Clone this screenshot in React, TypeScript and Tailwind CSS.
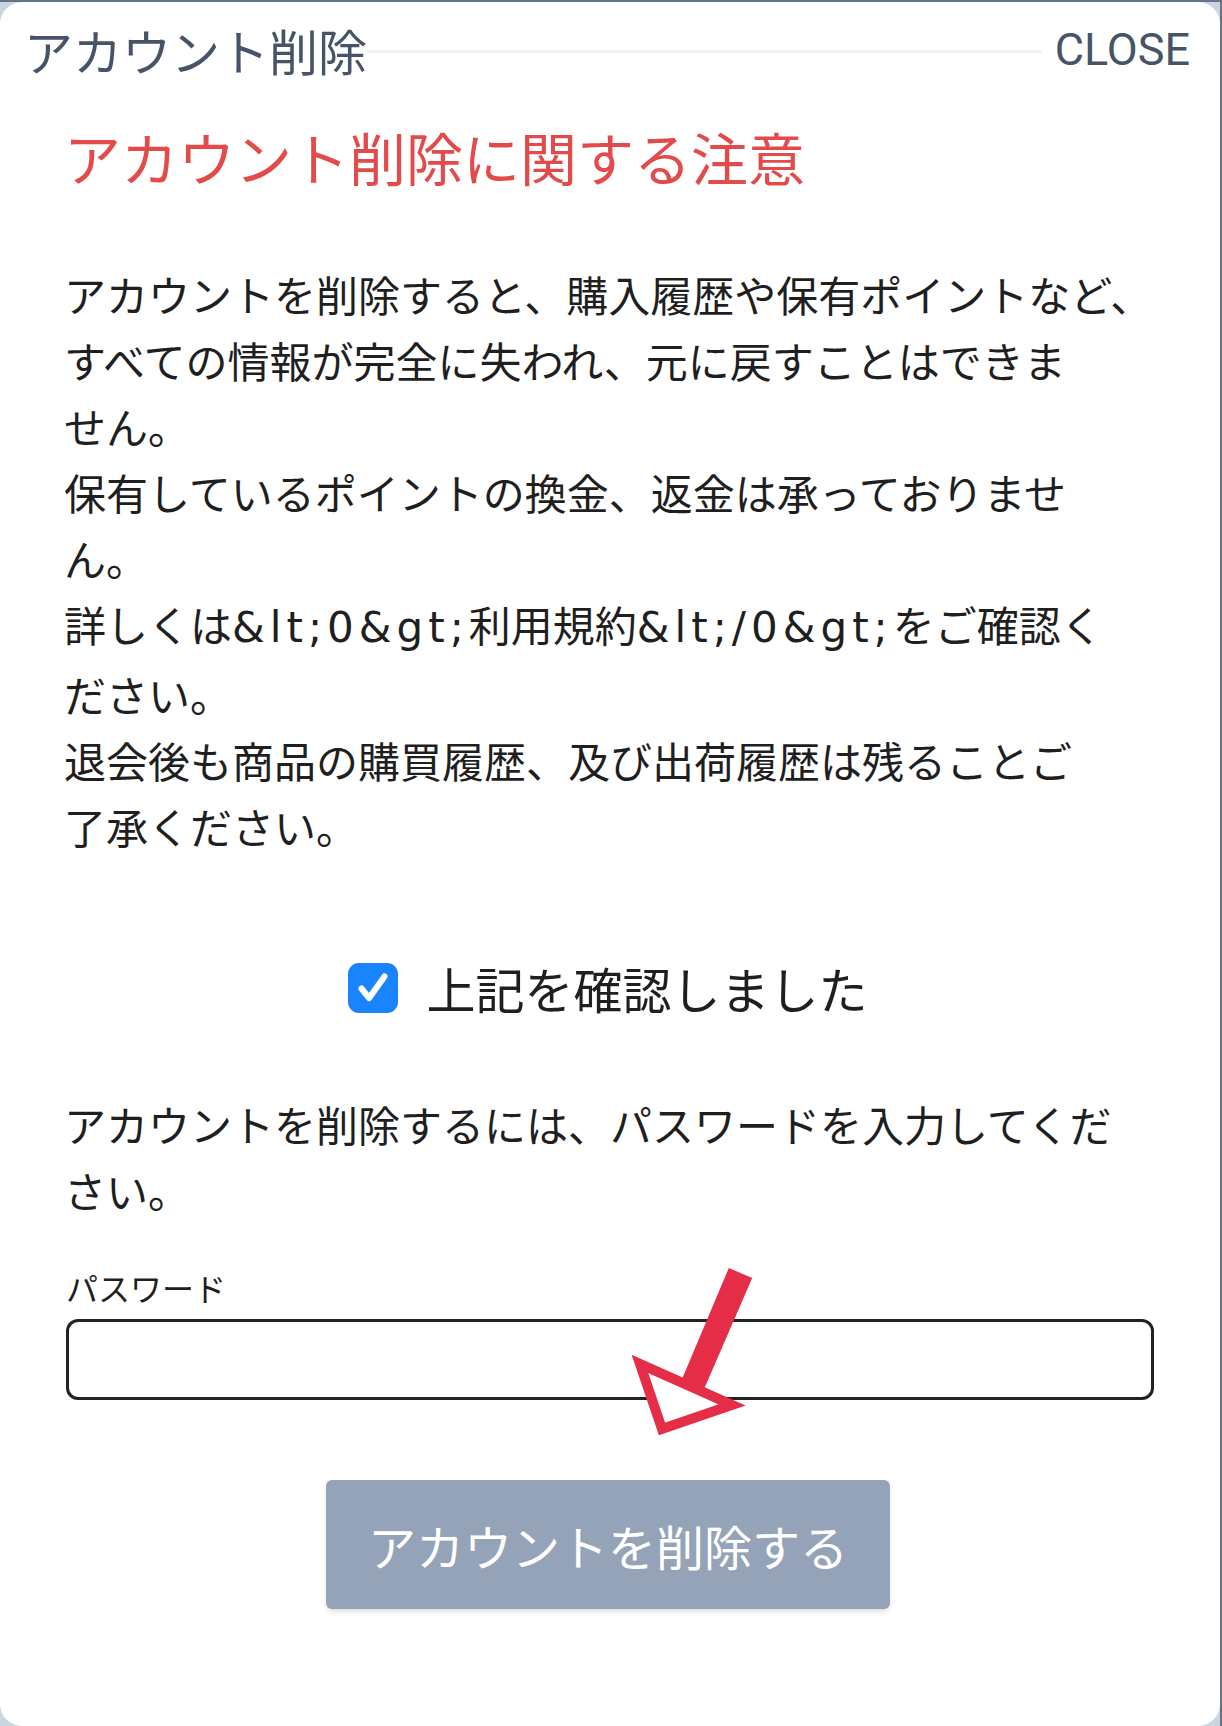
import React from 'react';

/**
 * アカウント削除モーダル
 */
const jp = "font-['Noto_Sans_CJK_JP',sans-serif]";
const latin = "font-['DejaVu_Sans',sans-serif] tracking-[5px]";

const noticeLines: React.ReactNode[] = [
  'アカウントを削除すると、購入履歴や保有ポイントなど、',
  'すべての情報が完全に失われ、元に戻すことはできま',
  'せん。',
  '保有しているポイントの換金、返金は承っておりませ',
  'ん。',
  <>
    詳しくは<span className={latin}>&amp;lt;0&amp;gt;</span>利用規約
    <span className={latin}>&amp;lt;/0&amp;gt;</span>をご確認く
  </>,
  'ださい。',
  '退会後も商品の購買履歴、及び出荷履歴は残ることご',
  '了承ください。',
];

const RedArrow: React.FC = () => (
  <svg
    className="absolute left-[600px] top-[1260px] pointer-events-none"
    width="170"
    height="190"
    viewBox="0 0 170 190"
  >
    <polygon
      points="40,102 62,167 132,143"
      fill="white"
      stroke="#e52d47"
      strokeWidth="10"
      strokeLinejoin="miter"
    />
    <polygon points="128.8,6 152.2,16 103.2,129 80.8,120" fill="#e52d47" />
  </svg>
);

export default function App() {
  return (
    <div className="w-[1222px] h-[1726px] bg-[#cbd5e1] border-t-2 border-r-2 border-[#64748b] overflow-hidden">
      <div className={`relative h-full bg-white rounded-[22px] pt-[13px] ${jp}`}>
        {/* ヘッダー */}
        <div className="flex items-center h-[70px] pl-[24px] pr-[30px]">
          <h2 className="text-[49px] leading-[70px] text-[#475467] whitespace-nowrap">アカウント削除</h2>
          <div className="flex-1 h-[3px] bg-[#f1f3f5] mt-[2px]" />
          <button className="ml-[13px] font-['Roboto',sans-serif] text-[45px] leading-[70px] text-[#475467]">
            CLOSE
          </button>
        </div>

        <div className="pl-[64px] pr-[68px]">
          <h3 className="mt-[32px] text-[57px] leading-[78px] text-[#e34b4b] whitespace-nowrap">
            アカウント削除に関する注意
          </h3>

          <div className="mt-[66px] text-[42px] leading-[66px] text-[#1f1f1f]">
            {noticeLines.map((line, i) => (
              <p key={i} className="whitespace-nowrap">
                {line}
              </p>
            ))}
          </div>

          {/* 確認チェック */}
          <label className="mt-[99px] flex items-center justify-center gap-[28px] h-[60px]">
            <span className="flex items-center justify-center w-[50px] h-[50px] rounded-[11px] bg-[#1a84ff]">
              <svg width="46" height="46" viewBox="0 0 24 24" fill="none">
                <path
                  d="M6 12.3l4 4.9L18 6"
                  stroke="white"
                  strokeWidth="3.2"
                  strokeLinecap="round"
                  strokeLinejoin="round"
                />
              </svg>
            </span>
            <span className="text-[49px] leading-[60px] text-[#1f1f1f]">上記を確認しました</span>
          </label>

          <div className="mt-[73px] text-[42px] leading-[66px] text-[#1f1f1f]">
            <p className="whitespace-nowrap">アカウントを削除するには、パスワードを入力してくだ</p>
            <p>さい。</p>
          </div>

          <p className="mt-[44px] text-[32px] leading-[40px] text-[#1f1f1f] pl-[2px]">パスワード</p>
          <input
            type="password"
            className="mt-[12px] block w-[1088px] ml-[2px] h-[81px] border-[3px] border-[#222] rounded-[12px] bg-white"
          />

          <div className="mt-[80px] flex justify-center">
            <button className="w-[564px] h-[129px] rounded-[6px] bg-[#94a3b8] text-white text-[48px] shadow-md">
              アカウントを削除する
            </button>
          </div>
        </div>

        <RedArrow />
      </div>
    </div>
  );
}
